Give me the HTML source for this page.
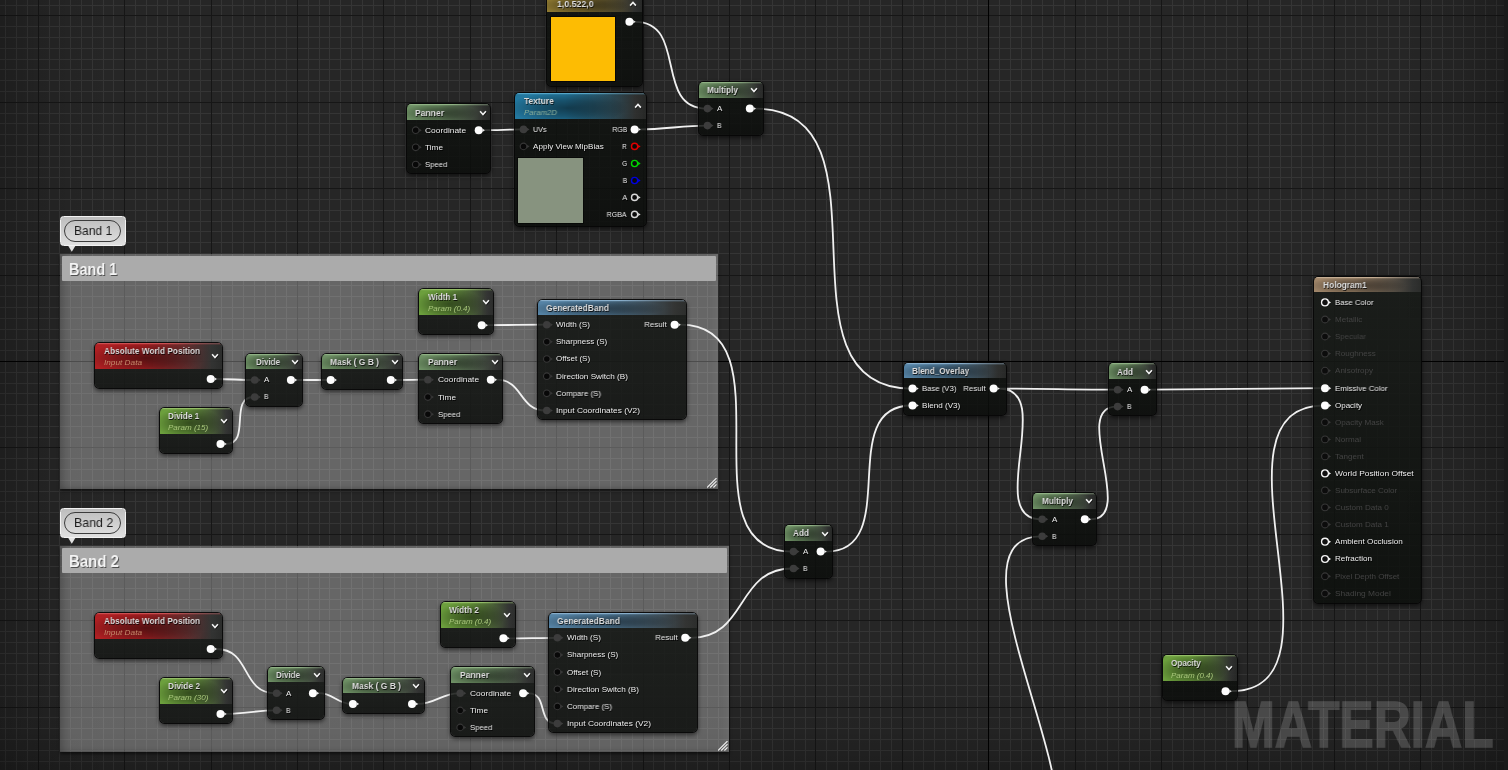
<!DOCTYPE html><html><head><meta charset="utf-8"><title>Material Graph</title><style>
html,body{margin:0;padding:0;background:#262626;}
body{width:1508px;height:770px;position:relative;overflow:hidden;font-family:"Liberation Sans",sans-serif;}
.grid,.wires,.vig{position:absolute;left:0;top:0;}
.abs{position:absolute;}
.vig{width:1508px;height:770px;background:
 linear-gradient(to right,rgba(0,0,0,.22) 0,rgba(0,0,0,.10) 40px,rgba(0,0,0,0) 110px),
 linear-gradient(to left,rgba(0,0,0,.25) 0,rgba(0,0,0,.10) 40px,rgba(0,0,0,0) 110px),
 linear-gradient(to top,rgba(0,0,0,.22) 0,rgba(0,0,0,.08) 40px,rgba(0,0,0,0) 100px);}
.rstrip{position:absolute;left:1504px;top:0;width:4px;height:770px;background:#1a1a1a;}
.cbody{position:absolute;background:rgba(255,255,255,.298);box-shadow:0 2px 3px rgba(0,0,0,.55),inset 9px 0 9px -6px rgba(0,0,0,.22),inset 0 -5px 5px -4px rgba(0,0,0,.18),inset -9px 0 9px -6px rgba(255,255,255,.06);}
.ctitle{position:absolute;background:#ababab;border-radius:1px;}
.tx{will-change:transform;position:absolute;white-space:nowrap;line-height:1;display:block;}
.ct{font-weight:bold;color:#f4f4f4;text-shadow:1px 1px 0 rgba(0,0,0,.55);}
.nt{font-weight:bold;color:#dcdcdc;text-shadow:0.7px 0.8px 0.5px rgba(0,0,0,.75);}
.st{font-style:italic;color:#a9c77c;}
.pl{color:#ececec;text-shadow:0.7px 0.8px 0 #000;}
.pd{color:#434343;}
.bt{color:#1c1c1c;}
.wm{font-weight:bold;color:#fff;-webkit-text-stroke:1.6px #fff;opacity:.175;}
.node{position:absolute;box-sizing:border-box;border-radius:4.6px;background:linear-gradient(to bottom,rgba(17,20,17,.85),rgba(11,13,11,.84));box-shadow:0 0 0 1px rgba(6,6,6,.92),0 2px 4px 1px rgba(0,0,0,.55);overflow:hidden;}
.tt{position:absolute;left:0;top:0;right:0;
 background:
  linear-gradient(to right,rgba(0,0,0,0) 55%,rgba(70,70,70,.8) 100%) 0 0/100% 1.3px no-repeat,
  linear-gradient(to bottom,var(--h) 0,var(--h) 1px,rgba(255,255,255,0) 1.6px),
  radial-gradient(ellipse 46% 62% at 40% 58%,rgba(0,0,0,.5) 0,rgba(0,0,0,.3) 50%,rgba(0,0,0,0) 100%),
  linear-gradient(to right,var(--c) 0,var(--c) 38%,rgba(70,70,70,.55) 92%,rgba(60,60,60,.5) 100%);
}
.sw{position:absolute;}
.bub{position:absolute;box-sizing:border-box;border:1px solid #f2f2f2;border-radius:3.5px;background:linear-gradient(to bottom,#bdbdbd,#e0e0e0);}
.pill{position:absolute;left:2.7px;right:3.5px;top:3.1px;bottom:3.1px;border:1px solid #3c3c3c;border-radius:12px;}
</style></head><body>
<svg class="grid" width="1508" height="770" viewBox="0 0 1508 770" shape-rendering="crispEdges"><g transform="translate(0.5,0.5)" fill="none" stroke-width="1"><path stroke="#353535" d="M5 -1v772M16 -1v772M27 -1v772M49 -1v772M59 -1v772M70 -1v772M81 -1v772M92 -1v772M103 -1v772M113 -1v772M135 -1v772M146 -1v772M157 -1v772M167 -1v772M178 -1v772M189 -1v772M200 -1v772M221 -1v772M232 -1v772M243 -1v772M254 -1v772M265 -1v772M275 -1v772M286 -1v772M308 -1v772M319 -1v772M329 -1v772M340 -1v772M351 -1v772M362 -1v772M373 -1v772M394 -1v772M405 -1v772M416 -1v772M427 -1v772M437 -1v772M448 -1v772M459 -1v772M481 -1v772M491 -1v772M502 -1v772M513 -1v772M524 -1v772M535 -1v772M545 -1v772M567 -1v772M578 -1v772M589 -1v772M599 -1v772M610 -1v772M621 -1v772M632 -1v772M653 -1v772M664 -1v772M675 -1v772M686 -1v772M697 -1v772M707 -1v772M718 -1v772M740 -1v772M751 -1v772M761 -1v772M772 -1v772M783 -1v772M794 -1v772M805 -1v772M826 -1v772M837 -1v772M848 -1v772M859 -1v772M869 -1v772M880 -1v772M891 -1v772M913 -1v772M923 -1v772M934 -1v772M945 -1v772M956 -1v772M967 -1v772M977 -1v772M999 -1v772M1010 -1v772M1021 -1v772M1031 -1v772M1042 -1v772M1053 -1v772M1064 -1v772M1085 -1v772M1096 -1v772M1107 -1v772M1118 -1v772M1129 -1v772M1139 -1v772M1150 -1v772M1172 -1v772M1183 -1v772M1193 -1v772M1204 -1v772M1215 -1v772M1226 -1v772M1237 -1v772M1258 -1v772M1269 -1v772M1280 -1v772M1291 -1v772M1301 -1v772M1312 -1v772M1323 -1v772M1345 -1v772M1355 -1v772M1366 -1v772M1377 -1v772M1388 -1v772M1399 -1v772M1409 -1v772M1431 -1v772M1442 -1v772M1453 -1v772M1463 -1v772M1474 -1v772M1485 -1v772M1496 -1v772M-1 5h1510M-1 26h1510M-1 37h1510M-1 48h1510M-1 59h1510M-1 69h1510M-1 80h1510M-1 91h1510M-1 113h1510M-1 123h1510M-1 134h1510M-1 145h1510M-1 156h1510M-1 167h1510M-1 177h1510M-1 199h1510M-1 210h1510M-1 221h1510M-1 231h1510M-1 242h1510M-1 253h1510M-1 264h1510M-1 285h1510M-1 296h1510M-1 307h1510M-1 318h1510M-1 329h1510M-1 339h1510M-1 350h1510M-1 372h1510M-1 383h1510M-1 393h1510M-1 404h1510M-1 415h1510M-1 426h1510M-1 437h1510M-1 458h1510M-1 469h1510M-1 480h1510M-1 491h1510M-1 501h1510M-1 512h1510M-1 523h1510M-1 545h1510M-1 555h1510M-1 566h1510M-1 577h1510M-1 588h1510M-1 599h1510M-1 609h1510M-1 631h1510M-1 642h1510M-1 653h1510M-1 663h1510M-1 674h1510M-1 685h1510M-1 696h1510M-1 717h1510M-1 728h1510M-1 739h1510M-1 750h1510M-1 761h1510"/><path stroke="#161616" d="M38 -1v772M124 -1v772M211 -1v772M297 -1v772M383 -1v772M470 -1v772M556 -1v772M643 -1v772M729 -1v772M815 -1v772M902 -1v772M1075 -1v772M1161 -1v772M1247 -1v772M1334 -1v772M1420 -1v772M1507 -1v772M-1 15h1510M-1 102h1510M-1 188h1510M-1 275h1510M-1 447h1510M-1 534h1510M-1 620h1510M-1 707h1510"/><path stroke="#000" d="M988 -1v772M-1 361h1510"/></g></svg>
<div class="vig"></div>
<div class="cbody" style="left:60.0px;top:254.0px;width:658.0px;height:235.0px"></div><div class="ctitle" style="left:62.0px;top:256.0px;width:654.0px;height:25.0px"></div><span id="t0" class="tx ct" style="top:261.13px;font-size:16.50px;left:69.20px;transform-origin:0 50%;transform:scaleX(0.8779);">Band 1</span><svg class="abs" style="left:707.0px;top:478.0px" width="10" height="10" viewBox="0 0 10 10"><path d="M0 9.5L9.5 0M3.2 9.5L9.5 3.2M6.4 9.5L9.5 6.4" stroke="#eee" stroke-width="1.1" fill="none"/></svg>
<div class="cbody" style="left:60.0px;top:546.0px;width:669.0px;height:206.0px"></div><div class="ctitle" style="left:62.0px;top:548.0px;width:665.0px;height:25.0px"></div><span id="t1" class="tx ct" style="top:553.13px;font-size:16.50px;left:69.20px;transform-origin:0 50%;transform:scaleX(0.9088);">Band 2</span><svg class="abs" style="left:718.0px;top:741.0px" width="10" height="10" viewBox="0 0 10 10"><path d="M0 9.5L9.5 0M3.2 9.5L9.5 3.2M6.4 9.5L9.5 6.4" stroke="#eee" stroke-width="1.1" fill="none"/></svg>
<svg class="wires" width="1508" height="770" viewBox="0 0 1508 770"><path d="M635.2 21.8C687.8 21.8 653.7 108.6 706.3 108.6M484.5 130.2C497.4 130.2 509.4 129.4 522.3 129.4M640.4 129.4C663.6 129.4 683.1 125.6 706.3 125.6M755.6 108.6C900.8 108.6 766.1 388.6 911.3 388.6M216.5 379.0C229.2 379.0 240.8 380.0 253.5 380.0M226.3 443.9C251.0 443.9 228.8 397.0 253.5 397.0M296.7 380.0C307.6 380.0 318.6 380.0 329.5 380.0M396.6 380.0C406.7 380.0 416.6 379.7 426.7 379.7M487.5 325.2C507.0 325.2 526.1 324.7 545.6 324.7M496.6 379.7C523.2 379.7 519.0 410.5 545.6 410.5M680.4 324.7C793.3 324.7 679.4 551.6 792.3 551.6M691.0 637.8C747.9 637.8 735.4 568.5 792.3 568.5M826.4 551.6C903.4 551.6 834.3 405.5 911.3 405.5M999.4 388.6C1038.8 388.6 1077.0 389.7 1116.4 389.7M999.4 388.6C1056.8 388.6 983.6 519.3 1041.0 519.3M1090.6 519.3C1136.8 519.3 1070.2 406.6 1116.4 406.6M1150.4 389.7C1208.7 389.7 1265.5 388.2 1323.8 388.2M1231.3 691.2C1357.4 691.2 1197.7 405.5 1323.8 405.5M216.5 649.0C250.9 649.0 241.0 693.2 275.4 693.2M226.3 713.9C243.9 713.9 257.8 710.3 275.4 710.3M318.7 693.2C333.3 693.2 337.1 703.9 351.7 703.9M417.8 703.9C435.1 703.9 441.7 693.3 459.0 693.3M509.2 638.3C525.0 638.3 540.4 637.8 556.2 637.8M528.9 693.3C548.1 693.3 537.0 723.6 556.2 723.6M1023.0 859.0C1136.6 859.0 927.4 536.3 1041.0 536.3" fill="none" stroke="#f0f0f0" stroke-width="1.8" stroke-linecap="round"/></svg>
<div class="node" style="left:547.0px;top:-4.0px;width:95.0px;height:89.7px"><div class="tt" style="height:16.0px;--c:#8d7831;--h:#b09a50"></div><div class="sw" style="left:4px;top:20.6px;width:64.4px;height:64.5px;background:#fdbc03;box-shadow:0 0 0 1px rgba(0,0,0,.55)"></div></div><span id="t2" class="tx nt" style="top:-1.08px;font-size:9.90px;left:556.60px;transform-origin:0 50%;transform:scaleX(0.8886);">1,0.522,0</span><svg class="abs" style="left:626.5px;top:-1.5px" width="12" height="10" viewBox="-6 -5 12 10"><path d="M-2.9 1.6L0 -1.6L2.9 1.6" transform="translate(0.6,0.8)" stroke="#000" stroke-opacity=".6" stroke-width="1.6" fill="none"/><path d="M-2.9 1.6L0 -1.6L2.9 1.6" stroke="#f2f2f2" stroke-width="1.6" fill="none"/></svg>
<div class="node" style="left:406.8px;top:103.8px;width:83.1px;height:69.5px"><div class="tt" style="height:16.2px;--c:#6d8f64;--h:#8fb184"></div></div><span id="t3" class="tx nt" style="top:107.62px;font-size:9.90px;left:415.30px;transform-origin:0 50%;transform:scaleX(0.8661);">Panner</span><svg class="abs" style="left:476.6px;top:107.5px" width="12" height="10" viewBox="-6 -5 12 10"><path d="M-2.9 -1.7L0 1.5L2.9 -1.7" transform="translate(0.6,0.8)" stroke="#000" stroke-opacity=".6" stroke-width="1.6" fill="none"/><path d="M-2.9 -1.7L0 1.5L2.9 -1.7" stroke="#f2f2f2" stroke-width="1.6" fill="none"/></svg><span id="t4" class="tx pl" style="top:126.63px;font-size:8.00px;left:425.30px;transform-origin:0 50%;transform:scaleX(1.0501);">Coordinate</span><span id="t5" class="tx pl" style="top:143.73px;font-size:8.00px;left:425.30px;transform-origin:0 50%;transform:scaleX(1.0295);">Time</span><span id="t6" class="tx pl" style="top:160.93px;font-size:8.00px;left:425.30px;transform-origin:0 50%;transform:scaleX(0.9637);">Speed</span>
<div class="node" style="left:515.1px;top:93.2px;width:130.6px;height:132.5px"><div class="tt" style="height:25.9px;--c:#23789f;--h:#55a5c8"></div><div class="sw" style="left:2.9px;top:65px;width:65px;height:64.8px;background:#87937f;box-shadow:0 0 0 1px rgba(0,0,0,.45)"></div></div><span id="t7" class="tx nt" style="top:95.82px;font-size:9.90px;left:523.50px;transform-origin:0 50%;transform:scaleX(0.8530);">Texture</span><span id="t8" class="tx st" style="top:108.83px;font-size:8.00px;left:523.50px;transform-origin:0 50%;transform:scaleX(0.9764);color:#8db29c;">Param2D</span><svg class="abs" style="left:631.7px;top:100.8px" width="12" height="10" viewBox="-6 -5 12 10"><path d="M-2.9 1.6L0 -1.6L2.9 1.6" transform="translate(0.6,0.8)" stroke="#000" stroke-opacity=".6" stroke-width="1.6" fill="none"/><path d="M-2.9 1.6L0 -1.6L2.9 1.6" stroke="#f2f2f2" stroke-width="1.6" fill="none"/></svg><span id="t9" class="tx pl" style="top:125.83px;font-size:8.00px;left:533.10px;transform-origin:0 50%;transform:scaleX(0.9058);">UVs</span><span id="t10" class="tx pl" style="top:142.83px;font-size:8.00px;left:533.10px;transform-origin:0 50%;transform:scaleX(1.0099);">Apply View MipBias</span><span id="t11" class="tx pl" style="top:125.83px;font-size:8.00px;right:881.00px;transform-origin:100% 50%;transform:scaleX(0.8649);">RGB</span><span id="t12" class="tx pl" style="top:142.83px;font-size:8.00px;right:881.00px;transform-origin:100% 50%;transform:scaleX(0.7957);">R</span><span id="t13" class="tx pl" style="top:159.93px;font-size:8.00px;right:881.00px;transform-origin:100% 50%;transform:scaleX(0.8341);">G</span><span id="t14" class="tx pl" style="top:176.93px;font-size:8.00px;right:881.00px;transform-origin:100% 50%;transform:scaleX(0.8608);">B</span><span id="t15" class="tx pl" style="top:193.83px;font-size:8.00px;right:881.00px;transform-origin:100% 50%;transform:scaleX(0.9357);">A</span><span id="t16" class="tx pl" style="top:210.83px;font-size:8.00px;right:881.00px;transform-origin:100% 50%;transform:scaleX(0.8821);">RGBA</span>
<div class="node" style="left:698.7px;top:81.6px;width:64.2px;height:53.6px"><div class="tt" style="height:16.6px;--c:#6d8f64;--h:#8fb184"></div></div><span id="t17" class="tx nt" style="top:85.42px;font-size:9.90px;left:707.20px;transform-origin:0 50%;transform:scaleX(0.8308);">Multiply</span><svg class="abs" style="left:747.7px;top:85.3px" width="12" height="10" viewBox="-6 -5 12 10"><path d="M-2.9 -1.7L0 1.5L2.9 -1.7" transform="translate(0.6,0.8)" stroke="#000" stroke-opacity=".6" stroke-width="1.6" fill="none"/><path d="M-2.9 -1.7L0 1.5L2.9 -1.7" stroke="#f2f2f2" stroke-width="1.6" fill="none"/></svg><span id="t18" class="tx pl" style="top:105.03px;font-size:8.00px;left:717.10px;transform-origin:0 50%;transform:scaleX(0.9357);">A</span><span id="t19" class="tx pl" style="top:122.03px;font-size:8.00px;left:717.10px;transform-origin:0 50%;transform:scaleX(0.8608);">B</span>
<div class="node" style="left:95.2px;top:342.8px;width:127.3px;height:44.8px"><div class="tt" style="height:26.4px;--c:#b02023;--h:#cc5052"></div></div><span id="t20" class="tx nt" style="top:346.02px;font-size:9.90px;left:104.10px;transform-origin:0 50%;transform:scaleX(0.8385);">Absolute World Position</span><span id="t21" class="tx st" style="top:359.43px;font-size:8.00px;left:104.10px;transform-origin:0 50%;transform:scaleX(1.0292);color:#c58b6c;">Input Data</span><svg class="abs" style="left:208.6px;top:351.0px" width="12" height="10" viewBox="-6 -5 12 10"><path d="M-2.9 -1.7L0 1.5L2.9 -1.7" transform="translate(0.6,0.8)" stroke="#000" stroke-opacity=".6" stroke-width="1.6" fill="none"/><path d="M-2.9 -1.7L0 1.5L2.9 -1.7" stroke="#f2f2f2" stroke-width="1.6" fill="none"/></svg>
<div class="node" style="left:159.9px;top:408.2px;width:72.2px;height:44.4px"><div class="tt" style="height:25.9px;--c:#6c9f3d;--h:#93bd66"></div></div><span id="t22" class="tx nt" style="top:410.62px;font-size:9.90px;left:168.00px;transform-origin:0 50%;transform:scaleX(0.8211);">Divide 1</span><span id="t23" class="tx st" style="top:423.93px;font-size:8.00px;left:168.00px;transform-origin:0 50%;transform:scaleX(1.0046);color:#a9c77c;">Param (15)</span><svg class="abs" style="left:218.4px;top:416.4px" width="12" height="10" viewBox="-6 -5 12 10"><path d="M-2.9 -1.7L0 1.5L2.9 -1.7" transform="translate(0.6,0.8)" stroke="#000" stroke-opacity=".6" stroke-width="1.6" fill="none"/><path d="M-2.9 -1.7L0 1.5L2.9 -1.7" stroke="#f2f2f2" stroke-width="1.6" fill="none"/></svg>
<div class="node" style="left:95.2px;top:612.8px;width:127.3px;height:44.8px"><div class="tt" style="height:26.4px;--c:#b02023;--h:#cc5052"></div></div><span id="t24" class="tx nt" style="top:616.02px;font-size:9.90px;left:104.10px;transform-origin:0 50%;transform:scaleX(0.8385);">Absolute World Position</span><span id="t25" class="tx st" style="top:629.43px;font-size:8.00px;left:104.10px;transform-origin:0 50%;transform:scaleX(1.0292);color:#c58b6c;">Input Data</span><svg class="abs" style="left:208.6px;top:621.0px" width="12" height="10" viewBox="-6 -5 12 10"><path d="M-2.9 -1.7L0 1.5L2.9 -1.7" transform="translate(0.6,0.8)" stroke="#000" stroke-opacity=".6" stroke-width="1.6" fill="none"/><path d="M-2.9 -1.7L0 1.5L2.9 -1.7" stroke="#f2f2f2" stroke-width="1.6" fill="none"/></svg>
<div class="node" style="left:159.9px;top:678.2px;width:72.2px;height:44.4px"><div class="tt" style="height:25.9px;--c:#6c9f3d;--h:#93bd66"></div></div><span id="t26" class="tx nt" style="top:680.62px;font-size:9.90px;left:168.00px;transform-origin:0 50%;transform:scaleX(0.8449);">Divide 2</span><span id="t27" class="tx st" style="top:693.93px;font-size:8.00px;left:168.00px;transform-origin:0 50%;transform:scaleX(1.0121);color:#a9c77c;">Param (30)</span><svg class="abs" style="left:218.4px;top:686.4px" width="12" height="10" viewBox="-6 -5 12 10"><path d="M-2.9 -1.7L0 1.5L2.9 -1.7" transform="translate(0.6,0.8)" stroke="#000" stroke-opacity=".6" stroke-width="1.6" fill="none"/><path d="M-2.9 -1.7L0 1.5L2.9 -1.7" stroke="#f2f2f2" stroke-width="1.6" fill="none"/></svg>
<div class="node" style="left:246.1px;top:354.0px;width:56.1px;height:51.6px"><div class="tt" style="height:15.2px;--c:#6d8f64;--h:#8fb184"></div></div><span id="t28" class="tx nt" style="top:356.52px;font-size:9.90px;left:255.50px;transform-origin:0 50%;transform:scaleX(0.8097);">Divide</span><svg class="abs" style="left:288.8px;top:357.1px" width="12" height="10" viewBox="-6 -5 12 10"><path d="M-2.9 -1.7L0 1.5L2.9 -1.7" transform="translate(0.6,0.8)" stroke="#000" stroke-opacity=".6" stroke-width="1.6" fill="none"/><path d="M-2.9 -1.7L0 1.5L2.9 -1.7" stroke="#f2f2f2" stroke-width="1.6" fill="none"/></svg><span id="t29" class="tx pl" style="top:376.43px;font-size:8.00px;left:264.30px;transform-origin:0 50%;transform:scaleX(0.9357);">A</span><span id="t30" class="tx pl" style="top:393.43px;font-size:8.00px;left:264.30px;transform-origin:0 50%;transform:scaleX(0.8608);">B</span>
<div class="node" style="left:321.8px;top:354.0px;width:80.3px;height:34.6px"><div class="tt" style="height:15.2px;--c:#6d8f64;--h:#8fb184"></div></div><span id="t31" class="tx nt" style="top:356.52px;font-size:9.90px;left:330.20px;transform-origin:0 50%;transform:scaleX(0.8585);">Mask ( G B )</span><svg class="abs" style="left:388.7px;top:357.1px" width="12" height="10" viewBox="-6 -5 12 10"><path d="M-2.9 -1.7L0 1.5L2.9 -1.7" transform="translate(0.6,0.8)" stroke="#000" stroke-opacity=".6" stroke-width="1.6" fill="none"/><path d="M-2.9 -1.7L0 1.5L2.9 -1.7" stroke="#f2f2f2" stroke-width="1.6" fill="none"/></svg>
<div class="node" style="left:419.0px;top:288.8px;width:74.2px;height:45.1px"><div class="tt" style="height:26.2px;--c:#6c9f3d;--h:#93bd66"></div></div><span id="t32" class="tx nt" style="top:291.62px;font-size:9.90px;left:428.10px;transform-origin:0 50%;transform:scaleX(0.8207);">Width 1</span><span id="t33" class="tx st" style="top:304.93px;font-size:8.00px;left:428.10px;transform-origin:0 50%;transform:scaleX(0.9945);color:#a9c77c;">Param (0.4)</span><svg class="abs" style="left:479.6px;top:297.0px" width="12" height="10" viewBox="-6 -5 12 10"><path d="M-2.9 -1.7L0 1.5L2.9 -1.7" transform="translate(0.6,0.8)" stroke="#000" stroke-opacity=".6" stroke-width="1.6" fill="none"/><path d="M-2.9 -1.7L0 1.5L2.9 -1.7" stroke="#f2f2f2" stroke-width="1.6" fill="none"/></svg>
<div class="node" style="left:419.0px;top:354.2px;width:82.9px;height:68.8px"><div class="tt" style="height:15.4px;--c:#6d8f64;--h:#8fb184"></div></div><span id="t34" class="tx nt" style="top:356.52px;font-size:9.90px;left:428.00px;transform-origin:0 50%;transform:scaleX(0.8661);">Panner</span><svg class="abs" style="left:488.7px;top:357.3px" width="12" height="10" viewBox="-6 -5 12 10"><path d="M-2.9 -1.7L0 1.5L2.9 -1.7" transform="translate(0.6,0.8)" stroke="#000" stroke-opacity=".6" stroke-width="1.6" fill="none"/><path d="M-2.9 -1.7L0 1.5L2.9 -1.7" stroke="#f2f2f2" stroke-width="1.6" fill="none"/></svg><span id="t35" class="tx pl" style="top:376.13px;font-size:8.00px;left:437.50px;transform-origin:0 50%;transform:scaleX(1.0501);">Coordinate</span><span id="t36" class="tx pl" style="top:393.53px;font-size:8.00px;left:437.50px;transform-origin:0 50%;transform:scaleX(1.0295);">Time</span><span id="t37" class="tx pl" style="top:410.63px;font-size:8.00px;left:437.50px;transform-origin:0 50%;transform:scaleX(0.9637);">Speed</span>
<div class="node" style="left:538.3px;top:300.2px;width:147.8px;height:118.6px"><div class="tt" style="height:15.0px;--c:#5583a5;--h:#88aecb"></div></div><span id="t38" class="tx nt" style="top:302.52px;font-size:9.90px;left:546.00px;transform-origin:0 50%;transform:scaleX(0.8566);">GeneratedBand</span><span id="t39" class="tx pl" style="top:321.13px;font-size:8.00px;left:556.40px;transform-origin:0 50%;transform:scaleX(1.0197);">Width (S)</span><span id="t40" class="tx pl" style="top:338.23px;font-size:8.00px;left:556.40px;transform-origin:0 50%;transform:scaleX(0.9973);">Sharpness (S)</span><span id="t41" class="tx pl" style="top:355.43px;font-size:8.00px;left:556.40px;transform-origin:0 50%;transform:scaleX(1.0002);">Offset (S)</span><span id="t42" class="tx pl" style="top:372.63px;font-size:8.00px;left:556.40px;transform-origin:0 50%;transform:scaleX(1.0249);">Direction Switch (B)</span><span id="t43" class="tx pl" style="top:389.73px;font-size:8.00px;left:556.40px;transform-origin:0 50%;transform:scaleX(0.9826);">Compare (S)</span><span id="t44" class="tx pl" style="top:406.93px;font-size:8.00px;left:556.40px;transform-origin:0 50%;transform:scaleX(1.0435);">Input Coordinates (V2)</span><span id="t45" class="tx pl" style="top:321.13px;font-size:8.00px;right:841.00px;transform-origin:100% 50%;transform:scaleX(0.9873);">Result</span>
<div class="node" style="left:548.9px;top:613.3px;width:147.8px;height:118.6px"><div class="tt" style="height:15.0px;--c:#5583a5;--h:#88aecb"></div></div><span id="t46" class="tx nt" style="top:615.62px;font-size:9.90px;left:556.60px;transform-origin:0 50%;transform:scaleX(0.8566);">GeneratedBand</span><span id="t47" class="tx pl" style="top:634.23px;font-size:8.00px;left:567.00px;transform-origin:0 50%;transform:scaleX(1.0197);">Width (S)</span><span id="t48" class="tx pl" style="top:651.33px;font-size:8.00px;left:567.00px;transform-origin:0 50%;transform:scaleX(0.9973);">Sharpness (S)</span><span id="t49" class="tx pl" style="top:668.53px;font-size:8.00px;left:567.00px;transform-origin:0 50%;transform:scaleX(1.0002);">Offset (S)</span><span id="t50" class="tx pl" style="top:685.73px;font-size:8.00px;left:567.00px;transform-origin:0 50%;transform:scaleX(1.0249);">Direction Switch (B)</span><span id="t51" class="tx pl" style="top:702.83px;font-size:8.00px;left:567.00px;transform-origin:0 50%;transform:scaleX(0.9826);">Compare (S)</span><span id="t52" class="tx pl" style="top:720.03px;font-size:8.00px;left:567.00px;transform-origin:0 50%;transform:scaleX(1.0435);">Input Coordinates (V2)</span><span id="t53" class="tx pl" style="top:634.23px;font-size:8.00px;right:830.40px;transform-origin:100% 50%;transform:scaleX(0.9873);">Result</span>
<div class="node" style="left:440.7px;top:601.9px;width:74.4px;height:45.0px"><div class="tt" style="height:26.2px;--c:#6c9f3d;--h:#93bd66"></div></div><span id="t54" class="tx nt" style="top:604.72px;font-size:9.90px;left:449.10px;transform-origin:0 50%;transform:scaleX(0.8432);">Width 2</span><span id="t55" class="tx st" style="top:618.03px;font-size:8.00px;left:449.10px;transform-origin:0 50%;transform:scaleX(0.9945);color:#a9c77c;">Param (0.4)</span><svg class="abs" style="left:501.3px;top:610.1px" width="12" height="10" viewBox="-6 -5 12 10"><path d="M-2.9 -1.7L0 1.5L2.9 -1.7" transform="translate(0.6,0.8)" stroke="#000" stroke-opacity=".6" stroke-width="1.6" fill="none"/><path d="M-2.9 -1.7L0 1.5L2.9 -1.7" stroke="#f2f2f2" stroke-width="1.6" fill="none"/></svg>
<div class="node" style="left:267.8px;top:666.9px;width:56.2px;height:52.0px"><div class="tt" style="height:15.6px;--c:#6d8f64;--h:#8fb184"></div></div><span id="t56" class="tx nt" style="top:670.42px;font-size:9.90px;left:276.40px;transform-origin:0 50%;transform:scaleX(0.8097);">Divide</span><svg class="abs" style="left:310.8px;top:670.0px" width="12" height="10" viewBox="-6 -5 12 10"><path d="M-2.9 -1.7L0 1.5L2.9 -1.7" transform="translate(0.6,0.8)" stroke="#000" stroke-opacity=".6" stroke-width="1.6" fill="none"/><path d="M-2.9 -1.7L0 1.5L2.9 -1.7" stroke="#f2f2f2" stroke-width="1.6" fill="none"/></svg><span id="t57" class="tx pl" style="top:689.63px;font-size:8.00px;left:286.20px;transform-origin:0 50%;transform:scaleX(0.9357);">A</span><span id="t58" class="tx pl" style="top:706.73px;font-size:8.00px;left:286.20px;transform-origin:0 50%;transform:scaleX(0.8608);">B</span>
<div class="node" style="left:343.0px;top:678.0px;width:80.9px;height:34.9px"><div class="tt" style="height:15.4px;--c:#6d8f64;--h:#8fb184"></div></div><span id="t59" class="tx nt" style="top:680.62px;font-size:9.90px;left:351.60px;transform-origin:0 50%;transform:scaleX(0.8585);">Mask ( G B )</span><svg class="abs" style="left:409.9px;top:681.1px" width="12" height="10" viewBox="-6 -5 12 10"><path d="M-2.9 -1.7L0 1.5L2.9 -1.7" transform="translate(0.6,0.8)" stroke="#000" stroke-opacity=".6" stroke-width="1.6" fill="none"/><path d="M-2.9 -1.7L0 1.5L2.9 -1.7" stroke="#f2f2f2" stroke-width="1.6" fill="none"/></svg>
<div class="node" style="left:451.1px;top:667.2px;width:82.9px;height:68.7px"><div class="tt" style="height:15.6px;--c:#6d8f64;--h:#8fb184"></div></div><span id="t60" class="tx nt" style="top:669.82px;font-size:9.90px;left:460.00px;transform-origin:0 50%;transform:scaleX(0.8661);">Panner</span><svg class="abs" style="left:521.0px;top:670.3px" width="12" height="10" viewBox="-6 -5 12 10"><path d="M-2.9 -1.7L0 1.5L2.9 -1.7" transform="translate(0.6,0.8)" stroke="#000" stroke-opacity=".6" stroke-width="1.6" fill="none"/><path d="M-2.9 -1.7L0 1.5L2.9 -1.7" stroke="#f2f2f2" stroke-width="1.6" fill="none"/></svg><span id="t61" class="tx pl" style="top:689.73px;font-size:8.00px;left:469.80px;transform-origin:0 50%;transform:scaleX(1.0501);">Coordinate</span><span id="t62" class="tx pl" style="top:706.83px;font-size:8.00px;left:469.80px;transform-origin:0 50%;transform:scaleX(1.0295);">Time</span><span id="t63" class="tx pl" style="top:723.83px;font-size:8.00px;left:469.80px;transform-origin:0 50%;transform:scaleX(0.9637);">Speed</span>
<div class="node" style="left:784.7px;top:524.9px;width:47.5px;height:52.7px"><div class="tt" style="height:16.3px;--c:#6d8f64;--h:#8fb184"></div></div><span id="t64" class="tx nt" style="top:528.42px;font-size:9.90px;left:793.00px;transform-origin:0 50%;transform:scaleX(0.8280);">Add</span><svg class="abs" style="left:818.5px;top:528.6px" width="12" height="10" viewBox="-6 -5 12 10"><path d="M-2.9 -1.7L0 1.5L2.9 -1.7" transform="translate(0.6,0.8)" stroke="#000" stroke-opacity=".6" stroke-width="1.6" fill="none"/><path d="M-2.9 -1.7L0 1.5L2.9 -1.7" stroke="#f2f2f2" stroke-width="1.6" fill="none"/></svg><span id="t65" class="tx pl" style="top:548.03px;font-size:8.00px;left:803.10px;transform-origin:0 50%;transform:scaleX(0.9357);">A</span><span id="t66" class="tx pl" style="top:564.93px;font-size:8.00px;left:803.10px;transform-origin:0 50%;transform:scaleX(0.8608);">B</span>
<div class="node" style="left:903.9px;top:363.0px;width:102.5px;height:51.5px"><div class="tt" style="height:15.2px;--c:#5583a5;--h:#88aecb"></div></div><span id="t67" class="tx nt" style="top:365.52px;font-size:9.90px;left:912.30px;transform-origin:0 50%;transform:scaleX(0.8269);">Blend_Overlay</span><span id="t68" class="tx pl" style="top:385.03px;font-size:8.00px;left:922.10px;transform-origin:0 50%;transform:scaleX(0.9669);">Base (V3)</span><span id="t69" class="tx pl" style="top:401.93px;font-size:8.00px;left:922.10px;transform-origin:0 50%;transform:scaleX(1.0133);">Blend (V3)</span><span id="t70" class="tx pl" style="top:385.03px;font-size:8.00px;right:522.00px;transform-origin:100% 50%;transform:scaleX(0.9873);">Result</span>
<div class="node" style="left:1108.5px;top:363.0px;width:47.6px;height:52.2px"><div class="tt" style="height:16.4px;--c:#6d8f64;--h:#8fb184"></div></div><span id="t71" class="tx nt" style="top:366.52px;font-size:9.90px;left:1116.80px;transform-origin:0 50%;transform:scaleX(0.8280);">Add</span><svg class="abs" style="left:1142.5px;top:366.7px" width="12" height="10" viewBox="-6 -5 12 10"><path d="M-2.9 -1.7L0 1.5L2.9 -1.7" transform="translate(0.6,0.8)" stroke="#000" stroke-opacity=".6" stroke-width="1.6" fill="none"/><path d="M-2.9 -1.7L0 1.5L2.9 -1.7" stroke="#f2f2f2" stroke-width="1.6" fill="none"/></svg><span id="t72" class="tx pl" style="top:386.13px;font-size:8.00px;left:1127.20px;transform-origin:0 50%;transform:scaleX(0.9357);">A</span><span id="t73" class="tx pl" style="top:403.03px;font-size:8.00px;left:1127.20px;transform-origin:0 50%;transform:scaleX(0.8608);">B</span>
<div class="node" style="left:1032.6px;top:492.7px;width:63.8px;height:52.5px"><div class="tt" style="height:16.4px;--c:#6d8f64;--h:#8fb184"></div></div><span id="t74" class="tx nt" style="top:496.32px;font-size:9.90px;left:1041.60px;transform-origin:0 50%;transform:scaleX(0.8308);">Multiply</span><svg class="abs" style="left:1082.7px;top:496.4px" width="12" height="10" viewBox="-6 -5 12 10"><path d="M-2.9 -1.7L0 1.5L2.9 -1.7" transform="translate(0.6,0.8)" stroke="#000" stroke-opacity=".6" stroke-width="1.6" fill="none"/><path d="M-2.9 -1.7L0 1.5L2.9 -1.7" stroke="#f2f2f2" stroke-width="1.6" fill="none"/></svg><span id="t75" class="tx pl" style="top:515.73px;font-size:8.00px;left:1051.80px;transform-origin:0 50%;transform:scaleX(0.9357);">A</span><span id="t76" class="tx pl" style="top:532.73px;font-size:8.00px;left:1051.80px;transform-origin:0 50%;transform:scaleX(0.8608);">B</span>
<div class="node" style="left:1162.9px;top:654.6px;width:74.3px;height:45.3px"><div class="tt" style="height:26.5px;--c:#6c9f3d;--h:#93bd66"></div></div><span id="t77" class="tx nt" style="top:657.82px;font-size:9.90px;left:1171.40px;transform-origin:0 50%;transform:scaleX(0.8224);">Opacity</span><span id="t78" class="tx st" style="top:671.53px;font-size:8.00px;left:1171.40px;transform-origin:0 50%;transform:scaleX(0.9945);color:#a9c77c;">Param (0.4)</span><svg class="abs" style="left:1223.4px;top:663.4px" width="12" height="10" viewBox="-6 -5 12 10"><path d="M-2.9 -1.7L0 1.5L2.9 -1.7" transform="translate(0.6,0.8)" stroke="#000" stroke-opacity=".6" stroke-width="1.6" fill="none"/><path d="M-2.9 -1.7L0 1.5L2.9 -1.7" stroke="#f2f2f2" stroke-width="1.6" fill="none"/></svg>
<div class="node" style="left:1314.4px;top:277.2px;width:106.8px;height:326.2px;background:linear-gradient(to bottom,rgba(25,28,25,.9),rgba(19,22,19,.88) 50%,rgba(12,15,12,.86))"><div class="tt" style="height:14.7px;--c:#a0866a;--h:#c4ad93"></div></div><span id="t79" class="tx nt" style="top:280.02px;font-size:9.90px;left:1322.90px;transform-origin:0 50%;transform:scaleX(0.8489);">Hologram1</span><span id="t80" class="tx pl" style="top:298.83px;font-size:8.00px;left:1334.60px;transform-origin:0 50%;transform:scaleX(0.9728);">Base Color</span><span id="t81" class="tx pd" style="top:315.93px;font-size:8.00px;left:1334.60px;transform-origin:0 50%;transform:scaleX(1.0065);color:#434343;">Metallic</span><span id="t82" class="tx pd" style="top:332.93px;font-size:8.00px;left:1334.60px;transform-origin:0 50%;transform:scaleX(0.9817);color:#434343;">Specular</span><span id="t83" class="tx pd" style="top:350.03px;font-size:8.00px;left:1334.60px;transform-origin:0 50%;transform:scaleX(1.0075);color:#434343;">Roughness</span><span id="t84" class="tx pd" style="top:367.13px;font-size:8.00px;left:1334.60px;transform-origin:0 50%;transform:scaleX(1.0075);color:#434343;">Anisotropy</span><span id="t85" class="tx pl" style="top:384.63px;font-size:8.00px;left:1334.60px;transform-origin:0 50%;transform:scaleX(0.9861);">Emissive Color</span><span id="t86" class="tx pl" style="top:401.93px;font-size:8.00px;left:1334.60px;transform-origin:0 50%;transform:scaleX(0.9954);">Opacity</span><span id="t87" class="tx pd" style="top:418.73px;font-size:8.00px;left:1334.60px;transform-origin:0 50%;transform:scaleX(1.0075);color:#434343;">Opacity Mask</span><span id="t88" class="tx pd" style="top:435.83px;font-size:8.00px;left:1334.60px;transform-origin:0 50%;transform:scaleX(1.0075);color:#434343;">Normal</span><span id="t89" class="tx pd" style="top:452.83px;font-size:8.00px;left:1334.60px;transform-origin:0 50%;transform:scaleX(1.0075);color:#434343;">Tangent</span><span id="t90" class="tx pl" style="top:469.83px;font-size:8.00px;left:1334.60px;transform-origin:0 50%;transform:scaleX(1.0513);">World Position Offset</span><span id="t91" class="tx pd" style="top:486.83px;font-size:8.00px;left:1334.60px;transform-origin:0 50%;transform:scaleX(1.0075);color:#434343;">Subsurface Color</span><span id="t92" class="tx pd" style="top:503.83px;font-size:8.00px;left:1334.60px;transform-origin:0 50%;transform:scaleX(1.0075);color:#434343;">Custom Data 0</span><span id="t93" class="tx pd" style="top:520.93px;font-size:8.00px;left:1334.60px;transform-origin:0 50%;transform:scaleX(1.0075);color:#434343;">Custom Data 1</span><span id="t94" class="tx pl" style="top:538.13px;font-size:8.00px;left:1334.60px;transform-origin:0 50%;transform:scaleX(1.0164);">Ambient Occlusion</span><span id="t95" class="tx pl" style="top:555.43px;font-size:8.00px;left:1334.60px;transform-origin:0 50%;transform:scaleX(1.0146);">Refraction</span><span id="t96" class="tx pd" style="top:572.73px;font-size:8.00px;left:1334.60px;transform-origin:0 50%;transform:scaleX(0.9965);color:#434343;">Pixel Depth Offset</span><span id="t97" class="tx pd" style="top:589.93px;font-size:8.00px;left:1334.60px;transform-origin:0 50%;transform:scaleX(1.0454);color:#434343;">Shading Model</span>
<svg class="wires" width="1508" height="770" viewBox="0 0 1508 770"><g transform="translate(629.40,21.80)"><circle r="4.0" fill="#fdfdfd"/><path d="M3.7 -1.7L6.2 0L3.7 1.7Z" fill="#e8e8e8"/></g><g transform="translate(415.70,130.20)"><circle r="3.3" fill="#080808" stroke="#373737" stroke-width="1.1"/><path d="M3.5 -1.7L6.0 0L3.5 1.7Z" fill="#373737"/></g><g transform="translate(415.70,147.30)"><circle r="3.3" fill="#080808" stroke="#373737" stroke-width="1.1"/><path d="M3.5 -1.7L6.0 0L3.5 1.7Z" fill="#373737"/></g><g transform="translate(415.70,164.50)"><circle r="3.3" fill="#080808" stroke="#373737" stroke-width="1.1"/><path d="M3.5 -1.7L6.0 0L3.5 1.7Z" fill="#373737"/></g><g transform="translate(478.70,130.20)"><circle r="4.0" fill="#fdfdfd"/><path d="M3.7 -1.7L6.2 0L3.7 1.7Z" fill="#e8e8e8"/></g><g transform="translate(523.50,129.40)"><circle r="3.8" fill="#3c3c3c"/><path d="M3.5 -1.7L6.0 0L3.5 1.7Z" fill="#3c3c3c"/></g><g transform="translate(523.50,146.40)"><circle r="3.3" fill="#080808" stroke="#373737" stroke-width="1.1"/><path d="M3.5 -1.7L6.0 0L3.5 1.7Z" fill="#373737"/></g><g transform="translate(634.60,129.40)"><circle r="4.0" fill="#fdfdfd"/><path d="M3.7 -1.7L6.2 0L3.7 1.7Z" fill="#e8e8e8"/></g><g transform="translate(634.60,146.40)"><circle r="3.1" fill="#0a0a0a" stroke="#e00000" stroke-width="1.4"/><path d="M3.5 -1.7L6.0 0L3.5 1.7Z" fill="#e00000"/></g><g transform="translate(634.60,163.50)"><circle r="3.1" fill="#0a0a0a" stroke="#00d800" stroke-width="1.4"/><path d="M3.5 -1.7L6.0 0L3.5 1.7Z" fill="#00d800"/></g><g transform="translate(634.60,180.50)"><circle r="3.1" fill="#0a0a0a" stroke="#0000e0" stroke-width="1.4"/><path d="M3.5 -1.7L6.0 0L3.5 1.7Z" fill="#0000e0"/></g><g transform="translate(634.60,197.40)"><circle r="3.1" fill="#0a0a0a" stroke="#d8d8d8" stroke-width="1.4"/><path d="M3.5 -1.7L6.0 0L3.5 1.7Z" fill="#d8d8d8"/></g><g transform="translate(634.60,214.40)"><circle r="3.1" fill="#0a0a0a" stroke="#d8d8d8" stroke-width="1.4"/><path d="M3.5 -1.7L6.0 0L3.5 1.7Z" fill="#d8d8d8"/></g><g transform="translate(707.50,108.60)"><circle r="3.8" fill="#3c3c3c"/><path d="M3.5 -1.7L6.0 0L3.5 1.7Z" fill="#3c3c3c"/></g><g transform="translate(707.50,125.60)"><circle r="3.8" fill="#3c3c3c"/><path d="M3.5 -1.7L6.0 0L3.5 1.7Z" fill="#3c3c3c"/></g><g transform="translate(749.80,108.60)"><circle r="4.0" fill="#fdfdfd"/><path d="M3.7 -1.7L6.2 0L3.7 1.7Z" fill="#e8e8e8"/></g><g transform="translate(210.70,379.00)"><circle r="4.0" fill="#fdfdfd"/><path d="M3.7 -1.7L6.2 0L3.7 1.7Z" fill="#e8e8e8"/></g><g transform="translate(220.50,443.90)"><circle r="4.0" fill="#fdfdfd"/><path d="M3.7 -1.7L6.2 0L3.7 1.7Z" fill="#e8e8e8"/></g><g transform="translate(210.70,649.00)"><circle r="4.0" fill="#fdfdfd"/><path d="M3.7 -1.7L6.2 0L3.7 1.7Z" fill="#e8e8e8"/></g><g transform="translate(220.50,713.90)"><circle r="4.0" fill="#fdfdfd"/><path d="M3.7 -1.7L6.2 0L3.7 1.7Z" fill="#e8e8e8"/></g><g transform="translate(254.70,380.00)"><circle r="3.8" fill="#3c3c3c"/><path d="M3.5 -1.7L6.0 0L3.5 1.7Z" fill="#3c3c3c"/></g><g transform="translate(254.70,397.00)"><circle r="3.8" fill="#3c3c3c"/><path d="M3.5 -1.7L6.0 0L3.5 1.7Z" fill="#3c3c3c"/></g><g transform="translate(290.90,380.00)"><circle r="4.0" fill="#fdfdfd"/><path d="M3.7 -1.7L6.2 0L3.7 1.7Z" fill="#e8e8e8"/></g><g transform="translate(330.70,380.00)"><circle r="4.0" fill="#fdfdfd"/><path d="M3.7 -1.7L6.2 0L3.7 1.7Z" fill="#e8e8e8"/></g><g transform="translate(390.80,380.00)"><circle r="4.0" fill="#fdfdfd"/><path d="M3.7 -1.7L6.2 0L3.7 1.7Z" fill="#e8e8e8"/></g><g transform="translate(481.70,325.20)"><circle r="4.0" fill="#fdfdfd"/><path d="M3.7 -1.7L6.2 0L3.7 1.7Z" fill="#e8e8e8"/></g><g transform="translate(427.90,379.70)"><circle r="3.8" fill="#3c3c3c"/><path d="M3.5 -1.7L6.0 0L3.5 1.7Z" fill="#3c3c3c"/></g><g transform="translate(427.90,397.10)"><circle r="3.3" fill="#080808" stroke="#373737" stroke-width="1.1"/><path d="M3.5 -1.7L6.0 0L3.5 1.7Z" fill="#373737"/></g><g transform="translate(427.90,414.20)"><circle r="3.3" fill="#080808" stroke="#373737" stroke-width="1.1"/><path d="M3.5 -1.7L6.0 0L3.5 1.7Z" fill="#373737"/></g><g transform="translate(490.80,379.70)"><circle r="4.0" fill="#fdfdfd"/><path d="M3.7 -1.7L6.2 0L3.7 1.7Z" fill="#e8e8e8"/></g><g transform="translate(546.80,324.70)"><circle r="3.8" fill="#3c3c3c"/><path d="M3.5 -1.7L6.0 0L3.5 1.7Z" fill="#3c3c3c"/></g><g transform="translate(546.80,341.80)"><circle r="3.3" fill="#080808" stroke="#373737" stroke-width="1.1"/><path d="M3.5 -1.7L6.0 0L3.5 1.7Z" fill="#373737"/></g><g transform="translate(546.80,359.00)"><circle r="3.3" fill="#080808" stroke="#373737" stroke-width="1.1"/><path d="M3.5 -1.7L6.0 0L3.5 1.7Z" fill="#373737"/></g><g transform="translate(546.80,376.20)"><circle r="3.3" fill="#080808" stroke="#373737" stroke-width="1.1"/><path d="M3.5 -1.7L6.0 0L3.5 1.7Z" fill="#373737"/></g><g transform="translate(546.80,393.30)"><circle r="3.3" fill="#080808" stroke="#373737" stroke-width="1.1"/><path d="M3.5 -1.7L6.0 0L3.5 1.7Z" fill="#373737"/></g><g transform="translate(546.80,410.50)"><circle r="3.8" fill="#3c3c3c"/><path d="M3.5 -1.7L6.0 0L3.5 1.7Z" fill="#3c3c3c"/></g><g transform="translate(674.60,324.70)"><circle r="4.0" fill="#fdfdfd"/><path d="M3.7 -1.7L6.2 0L3.7 1.7Z" fill="#e8e8e8"/></g><g transform="translate(557.40,637.80)"><circle r="3.8" fill="#3c3c3c"/><path d="M3.5 -1.7L6.0 0L3.5 1.7Z" fill="#3c3c3c"/></g><g transform="translate(557.40,654.90)"><circle r="3.3" fill="#080808" stroke="#373737" stroke-width="1.1"/><path d="M3.5 -1.7L6.0 0L3.5 1.7Z" fill="#373737"/></g><g transform="translate(557.40,672.10)"><circle r="3.3" fill="#080808" stroke="#373737" stroke-width="1.1"/><path d="M3.5 -1.7L6.0 0L3.5 1.7Z" fill="#373737"/></g><g transform="translate(557.40,689.30)"><circle r="3.3" fill="#080808" stroke="#373737" stroke-width="1.1"/><path d="M3.5 -1.7L6.0 0L3.5 1.7Z" fill="#373737"/></g><g transform="translate(557.40,706.40)"><circle r="3.3" fill="#080808" stroke="#373737" stroke-width="1.1"/><path d="M3.5 -1.7L6.0 0L3.5 1.7Z" fill="#373737"/></g><g transform="translate(557.40,723.60)"><circle r="3.8" fill="#3c3c3c"/><path d="M3.5 -1.7L6.0 0L3.5 1.7Z" fill="#3c3c3c"/></g><g transform="translate(685.20,637.80)"><circle r="4.0" fill="#fdfdfd"/><path d="M3.7 -1.7L6.2 0L3.7 1.7Z" fill="#e8e8e8"/></g><g transform="translate(503.40,638.30)"><circle r="4.0" fill="#fdfdfd"/><path d="M3.7 -1.7L6.2 0L3.7 1.7Z" fill="#e8e8e8"/></g><g transform="translate(276.60,693.20)"><circle r="3.8" fill="#3c3c3c"/><path d="M3.5 -1.7L6.0 0L3.5 1.7Z" fill="#3c3c3c"/></g><g transform="translate(276.60,710.30)"><circle r="3.8" fill="#3c3c3c"/><path d="M3.5 -1.7L6.0 0L3.5 1.7Z" fill="#3c3c3c"/></g><g transform="translate(312.90,693.20)"><circle r="4.0" fill="#fdfdfd"/><path d="M3.7 -1.7L6.2 0L3.7 1.7Z" fill="#e8e8e8"/></g><g transform="translate(352.90,703.90)"><circle r="4.0" fill="#fdfdfd"/><path d="M3.7 -1.7L6.2 0L3.7 1.7Z" fill="#e8e8e8"/></g><g transform="translate(412.00,703.90)"><circle r="4.0" fill="#fdfdfd"/><path d="M3.7 -1.7L6.2 0L3.7 1.7Z" fill="#e8e8e8"/></g><g transform="translate(460.20,693.30)"><circle r="3.8" fill="#3c3c3c"/><path d="M3.5 -1.7L6.0 0L3.5 1.7Z" fill="#3c3c3c"/></g><g transform="translate(460.20,710.40)"><circle r="3.3" fill="#080808" stroke="#373737" stroke-width="1.1"/><path d="M3.5 -1.7L6.0 0L3.5 1.7Z" fill="#373737"/></g><g transform="translate(460.20,727.40)"><circle r="3.3" fill="#080808" stroke="#373737" stroke-width="1.1"/><path d="M3.5 -1.7L6.0 0L3.5 1.7Z" fill="#373737"/></g><g transform="translate(523.10,693.30)"><circle r="4.0" fill="#fdfdfd"/><path d="M3.7 -1.7L6.2 0L3.7 1.7Z" fill="#e8e8e8"/></g><g transform="translate(793.50,551.60)"><circle r="3.8" fill="#3c3c3c"/><path d="M3.5 -1.7L6.0 0L3.5 1.7Z" fill="#3c3c3c"/></g><g transform="translate(793.50,568.50)"><circle r="3.8" fill="#3c3c3c"/><path d="M3.5 -1.7L6.0 0L3.5 1.7Z" fill="#3c3c3c"/></g><g transform="translate(820.60,551.60)"><circle r="4.0" fill="#fdfdfd"/><path d="M3.7 -1.7L6.2 0L3.7 1.7Z" fill="#e8e8e8"/></g><g transform="translate(912.50,388.60)"><circle r="4.0" fill="#fdfdfd"/><path d="M3.7 -1.7L6.2 0L3.7 1.7Z" fill="#e8e8e8"/></g><g transform="translate(912.50,405.50)"><circle r="4.0" fill="#fdfdfd"/><path d="M3.7 -1.7L6.2 0L3.7 1.7Z" fill="#e8e8e8"/></g><g transform="translate(993.60,388.60)"><circle r="4.0" fill="#fdfdfd"/><path d="M3.7 -1.7L6.2 0L3.7 1.7Z" fill="#e8e8e8"/></g><g transform="translate(1117.60,389.70)"><circle r="3.8" fill="#3c3c3c"/><path d="M3.5 -1.7L6.0 0L3.5 1.7Z" fill="#3c3c3c"/></g><g transform="translate(1117.60,406.60)"><circle r="3.8" fill="#3c3c3c"/><path d="M3.5 -1.7L6.0 0L3.5 1.7Z" fill="#3c3c3c"/></g><g transform="translate(1144.60,389.70)"><circle r="4.0" fill="#fdfdfd"/><path d="M3.7 -1.7L6.2 0L3.7 1.7Z" fill="#e8e8e8"/></g><g transform="translate(1042.20,519.30)"><circle r="3.8" fill="#3c3c3c"/><path d="M3.5 -1.7L6.0 0L3.5 1.7Z" fill="#3c3c3c"/></g><g transform="translate(1042.20,536.30)"><circle r="3.8" fill="#3c3c3c"/><path d="M3.5 -1.7L6.0 0L3.5 1.7Z" fill="#3c3c3c"/></g><g transform="translate(1084.80,519.30)"><circle r="4.0" fill="#fdfdfd"/><path d="M3.7 -1.7L6.2 0L3.7 1.7Z" fill="#e8e8e8"/></g><g transform="translate(1225.50,691.20)"><circle r="4.0" fill="#fdfdfd"/><path d="M3.7 -1.7L6.2 0L3.7 1.7Z" fill="#e8e8e8"/></g><g transform="translate(1325.00,302.40)"><circle r="3.45" fill="#101010" stroke="#f4f4f4" stroke-width="1.3"/><path d="M3.5 -1.7L6.0 0L3.5 1.7Z" fill="#f4f4f4"/></g><g transform="translate(1325.00,319.50)"><circle r="3.4" fill="#0c0c0c" stroke="#383838" stroke-width="1.1"/><path d="M3.5 -1.7L6.0 0L3.5 1.7Z" fill="#383838"/></g><g transform="translate(1325.00,336.50)"><circle r="3.4" fill="#0c0c0c" stroke="#383838" stroke-width="1.1"/><path d="M3.5 -1.7L6.0 0L3.5 1.7Z" fill="#383838"/></g><g transform="translate(1325.00,353.60)"><circle r="3.4" fill="#0c0c0c" stroke="#383838" stroke-width="1.1"/><path d="M3.5 -1.7L6.0 0L3.5 1.7Z" fill="#383838"/></g><g transform="translate(1325.00,370.70)"><circle r="3.4" fill="#0c0c0c" stroke="#383838" stroke-width="1.1"/><path d="M3.5 -1.7L6.0 0L3.5 1.7Z" fill="#383838"/></g><g transform="translate(1325.00,388.20)"><circle r="4.0" fill="#fdfdfd"/><path d="M3.7 -1.7L6.2 0L3.7 1.7Z" fill="#e8e8e8"/></g><g transform="translate(1325.00,405.50)"><circle r="4.0" fill="#fdfdfd"/><path d="M3.7 -1.7L6.2 0L3.7 1.7Z" fill="#e8e8e8"/></g><g transform="translate(1325.00,422.30)"><circle r="3.4" fill="#0c0c0c" stroke="#383838" stroke-width="1.1"/><path d="M3.5 -1.7L6.0 0L3.5 1.7Z" fill="#383838"/></g><g transform="translate(1325.00,439.40)"><circle r="3.4" fill="#0c0c0c" stroke="#383838" stroke-width="1.1"/><path d="M3.5 -1.7L6.0 0L3.5 1.7Z" fill="#383838"/></g><g transform="translate(1325.00,456.40)"><circle r="3.4" fill="#0c0c0c" stroke="#383838" stroke-width="1.1"/><path d="M3.5 -1.7L6.0 0L3.5 1.7Z" fill="#383838"/></g><g transform="translate(1325.00,473.40)"><circle r="3.45" fill="#101010" stroke="#f4f4f4" stroke-width="1.3"/><path d="M3.5 -1.7L6.0 0L3.5 1.7Z" fill="#f4f4f4"/></g><g transform="translate(1325.00,490.40)"><circle r="3.4" fill="#0c0c0c" stroke="#383838" stroke-width="1.1"/><path d="M3.5 -1.7L6.0 0L3.5 1.7Z" fill="#383838"/></g><g transform="translate(1325.00,507.40)"><circle r="3.4" fill="#0c0c0c" stroke="#383838" stroke-width="1.1"/><path d="M3.5 -1.7L6.0 0L3.5 1.7Z" fill="#383838"/></g><g transform="translate(1325.00,524.50)"><circle r="3.4" fill="#0c0c0c" stroke="#383838" stroke-width="1.1"/><path d="M3.5 -1.7L6.0 0L3.5 1.7Z" fill="#383838"/></g><g transform="translate(1325.00,541.70)"><circle r="3.45" fill="#101010" stroke="#f4f4f4" stroke-width="1.3"/><path d="M3.5 -1.7L6.0 0L3.5 1.7Z" fill="#f4f4f4"/></g><g transform="translate(1325.00,559.00)"><circle r="3.45" fill="#101010" stroke="#f4f4f4" stroke-width="1.3"/><path d="M3.5 -1.7L6.0 0L3.5 1.7Z" fill="#f4f4f4"/></g><g transform="translate(1325.00,576.30)"><circle r="3.4" fill="#0c0c0c" stroke="#383838" stroke-width="1.1"/><path d="M3.5 -1.7L6.0 0L3.5 1.7Z" fill="#383838"/></g><g transform="translate(1325.00,593.50)"><circle r="3.4" fill="#0c0c0c" stroke="#383838" stroke-width="1.1"/><path d="M3.5 -1.7L6.0 0L3.5 1.7Z" fill="#383838"/></g></svg>
<div class="bub" style="left:60.3px;top:216.1px;width:65.7px;height:29.8px"><div class="pill"></div></div><svg class="abs" style="left:68.0px;top:245.6px" width="8" height="7" viewBox="0 0 8 7"><path d="M0.3 0L7.3 0L3.8 5.8Z" fill="#e2e2e2"/></svg><span id="t98" class="tx bt" style="top:224.56px;font-size:12.80px;left:74.10px;transform-origin:0 50%;transform:scaleX(0.9418);">Band 1</span>
<div class="bub" style="left:60.3px;top:508.1px;width:65.7px;height:29.8px"><div class="pill"></div></div><svg class="abs" style="left:68.0px;top:537.6px" width="8" height="7" viewBox="0 0 8 7"><path d="M0.3 0L7.3 0L3.8 5.8Z" fill="#e2e2e2"/></svg><span id="t99" class="tx bt" style="top:516.56px;font-size:12.80px;left:74.10px;transform-origin:0 50%;transform:scaleX(0.9664);">Band 2</span>
<span id="t100" class="tx wm" style="top:692.62px;font-size:64.60px;left:1232.20px;transform-origin:0 50%;transform:scaleX(0.7951);">MATERIAL</span>
<div class="rstrip"></div>
</body></html>
